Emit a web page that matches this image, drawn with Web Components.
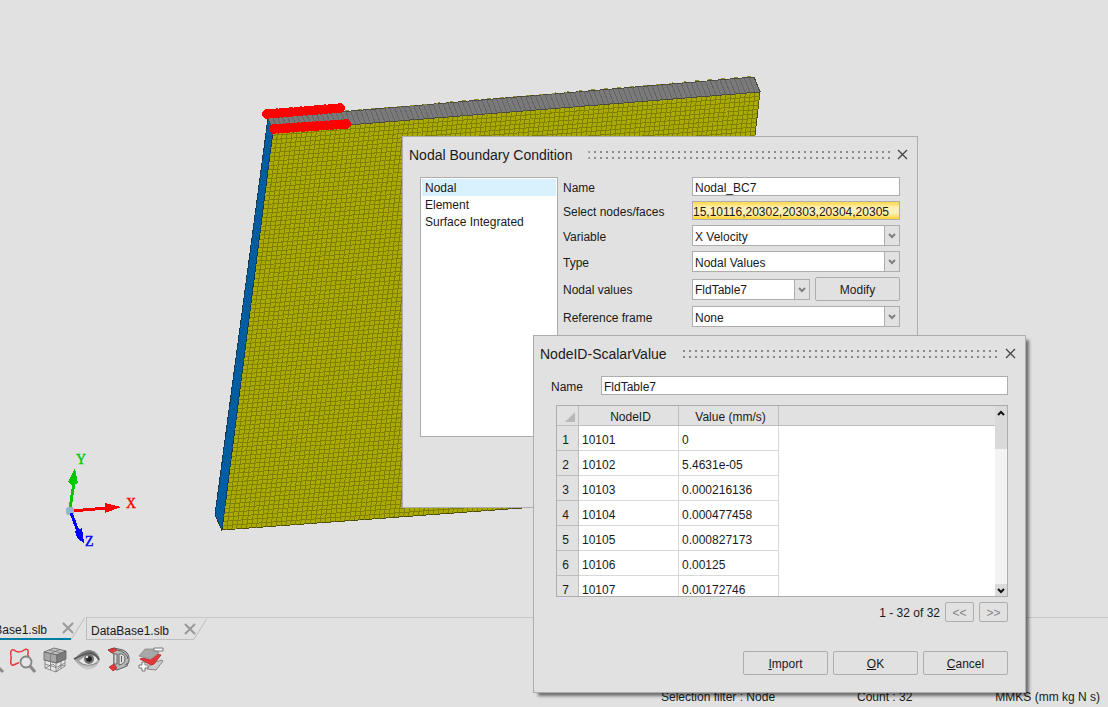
<!DOCTYPE html>
<html lang="en">
<head>
<meta charset="utf-8">
<title>Nodal Boundary Condition</title>
<style>
    html, body {
        margin: 0;
        height: 100%;
    }
    body {
        --panel: #e1e1e1;
        --line: #adadad;
        --text: #1a1a1a;
        overflow: hidden;
        background: var(--panel);
        color: var(--text);
        font: 12px/16px "Liberation Sans", Arial, sans-serif;
    }
</style>
</head>
<body>
<app-shell>
    <model-view slot="view"></model-view>
    <file-tabs slot="panel"></file-tabs>
    <tool-strip slot="panel"></tool-strip>
    <status-bar slot="panel"></status-bar>
    <tool-dialog slot="window" heading="Nodal Boundary Condition" style="left: 402px; top: 136px; width: 514px; height: 370px">
        <boundary-form></boundary-form>
    </tool-dialog>
    <tool-dialog slot="window" class="raised" heading="NodeID-ScalarValue" style="left: 533px; top: 335px; width: 491px; height: 356px">
        <value-form></value-form>
    </tool-dialog>
</app-shell>

<script>
const controls = `
    *, *::before, *::after { box-sizing: border-box; }
    input, select, button {
        margin: 0;
        font: inherit;
        color: inherit;
        border-radius: 0;
        outline: none;
    }
    label { padding-top: 2px; }
    input {
        width: 100%;
        min-width: 0;
        height: 19px;
        padding: 2px 2px 0;
        border: 1px solid var(--line);
        background: #fff;
    }
    .button {
        height: 24px;
        padding: 2px 0 0;
        border: 1px solid var(--line);
        border-radius: 2px;
        background: var(--panel);
    }
`;

class AppShell extends HTMLElement {
    constructor() {
        super();
        this.attachShadow({ mode: 'open' });
        this.shadowRoot.innerHTML = `
            <style>
                :host {
                    display: flex;
                    flex-direction: column;
                    position: relative;
                    height: 100vh;
                    overflow: hidden;
                }
                .view { flex: 1; min-height: 0; }
                .panel { display: flex; flex-direction: column; height: 90px; }
            </style>
            <div class="view"><slot name="view"></slot></div>
            <div class="panel"><slot name="panel"></slot></div>
            <slot name="window"></slot>
        `;
    }
}

class ModelView extends HTMLElement {
    constructor() {
        super();
        this.attachShadow({ mode: 'open' });
    }

    connectedCallback() {
        this.render();
    }

    mix(a, b, t) {
        return [a[0] + (b[0] - a[0]) * t, a[1] + (b[1] - a[1]) * t];
    }

    // lines that run from edge a-b to edge c-d
    lines(a, b, c, d, count) {
        let path = '';
        for (let i = 1; i < count; i++) {
            const p = this.mix(a, b, i / count);
            const q = this.mix(c, d, i / count);
            path += `M${p[0].toFixed(1)} ${p[1].toFixed(1)}L${q[0].toFixed(1)} ${q[1].toFixed(1)}`;
        }
        return path;
    }

    nodes(a, b, count) {
        let dots = '';
        for (let i = 0; i < count; i++) {
            const p = this.mix(a, b, i / (count - 1));
            dots += `<circle cx="${p[0].toFixed(1)}" cy="${p[1].toFixed(1)}" r="4.9"/>`;
        }
        return dots;
    }

    render() {
        const backLeft = [268, 118], backRight = [754, 77];
        const topLeft = [273, 131], topRight = [760, 92];
        const bottomLeft = [222, 530], bottomRight = [713, 494];
        const backBottom = [215, 515];
        const face = (...points) => points.map(p => p.join(',')).join(' ');

        this.shadowRoot.innerHTML = `
            <style>
                :host { display: block; height: 100%; }
                svg { display: block; width: 100%; height: 100%; overflow: visible; }
                text { font: 14px "Liberation Serif", "Times New Roman", serif; stroke-width: 0.4; }
            </style>
            <svg aria-label="Meshed plate">
                <g shape-rendering="crispEdges" fill="none">
                    <polygon fill="#aaaa00" stroke="#4d4d10" points="${face(topLeft, topRight, bottomRight, bottomLeft)}"/>
                    <path stroke="#808000" d="${this.lines(topLeft, topRight, bottomLeft, bottomRight, 100)}"/>
                    <path stroke="#808000" d="${this.lines(topLeft, bottomLeft, topRight, bottomRight, 92)}"/>
                    <polygon fill="#0062a8" stroke="#1c3444" points="${face(backLeft, topLeft, bottomLeft, backBottom)}"/>
                    <path stroke="#005795" d="${this.lines(backLeft, backBottom, topLeft, bottomLeft, 92)}"/>
                    <polygon fill="#7a7a7a" stroke="#4a4a3c" points="${face(backLeft, backRight, topRight, topLeft)}"/>
                    <path stroke="#646464" d="${this.lines(backLeft, backRight, topLeft, topRight, 100)}"/>
                    <path stroke="#8f8f2c" stroke-dasharray="4 9" d="M345 111L754 76"/>
                    <g fill="#ff0000">
                        ${this.nodes([267, 114], [340, 108], 16)}
                        ${this.nodes([274, 129], [346, 124], 16)}
                    </g>
                </g>
                <g stroke-width="3" shape-rendering="crispEdges">
                    <path stroke="#00c800" d="M70 509L74 482"/>
                    <path fill="#00c800" d="M75 468L78 483 73 486 68 482z"/>
                    <path stroke="#ff0000" d="M72 511L106 508"/>
                    <path fill="#ff0000" d="M105 503L121 507 105 513z"/>
                    <circle cx="70" cy="511" r="4.5" fill="#9db2cc"/>
                    <path stroke="#0000ff" d="M71 513L78 531"/>
                    <path fill="#0000ff" d="M75 531L82 528 84 543 77 538z"/>
                </g>
                <text x="76" y="464" fill="#00c800" stroke="#00c800">Y</text>
                <text x="126" y="508" fill="#ff0000" stroke="#ff0000">X</text>
                <text x="85" y="546" fill="#0000ff" stroke="#0000ff">Z</text>
            </svg>
        `;
    }
}

class FileTabs extends HTMLElement {
    constructor() {
        super();
        this.attachShadow({ mode: 'open' });
        const close = `
            <button aria-label="Close file">
                <svg width="12" height="12" fill="none" stroke="#999" stroke-width="2"><path d="M1 1L11 11M11 1L1 11"/></svg>
            </button>`;
        const edge = '<svg class="edge" width="14" height="23" fill="none" stroke="#bdbdbd"><path d="M0 22.5L14 .5"/></svg>';
        this.shadowRoot.innerHTML = `
            <style>
                :host { display: flex; height: 23px; }
                nav { display: flex; margin-left: -36px; }
                .tab { display: flex; }
                .label {
                    display: flex;
                    align-items: center;
                    gap: 13px;
                    height: 23px;
                    box-sizing: border-box;
                    padding-left: 5px;
                    border-bottom: 1px solid #bdbdbd;
                }
                .label a { width: 80px; color: inherit; text-decoration: none; padding-top: 4px; }
                .current .label { border-bottom: 2px solid #007fa3; }
                .other { margin-left: 1px; }
                .other .label { padding-left: 4px; border-left: 1px solid #bdbdbd; border-top: 1px solid #c6c6c6; }
                button { display: flex; margin: 0 -3px 0 0; padding: 0; border: 0; background: none; }
                .edge { display: block; }
                .other .edge { border-top: 1px solid #c6c6c6; box-sizing: border-box; }
                .rest { flex: 1; border-top: 1px solid #c6c6c6; }
            </style>
            <nav>
                <div class="tab current"><div class="label"><a href="#first">DataBase1.slb</a>${close}</div>${edge}</div>
                <div class="tab other"><div class="label"><a href="#second">DataBase1.slb</a>${close}</div>${edge}</div>
            </nav>
            <div class="rest"></div>
        `;
    }
}

class ToolStrip extends HTMLElement {
    constructor() {
        super();
        this.attachShadow({ mode: 'open' });
        this.shadowRoot.innerHTML = `
            <style>
                :host { display: flex; gap: 4px; margin: 6px 0 0 -23px; }
                button { padding: 0; border: 0; background: none; height: 28px; }
                svg { display: block; width: 28px; height: 28px; }
            </style>
            <button aria-label="Zoom">
                <svg viewBox="0 0 28 28" fill="none" stroke="#888"><circle cx="15" cy="15" r="7" stroke-width="2"/><path d="M20 20L26 26" stroke-width="3"/></svg>
            </button>
            <button aria-label="Zoom region">
                <svg viewBox="0 0 28 28" fill="none">
                    <path stroke="#e8383d" stroke-width="1.5" d="M10 17C7 17 5 20 3 19C0 17 3 13 2 10C1 6 2 3 5 4C8 7 13 6 15 4C18 2 20 4 19 7C18 9 19 10 20 11"/>
                    <circle cx="17" cy="16" r="5.5" fill="#e6e6e6" stroke="#858585" stroke-width="1.8"/>
                    <path stroke="#888" stroke-width="3" d="M21 20L26 26"/>
                </svg>
            </button>
            <button aria-label="Mesh">
                <svg viewBox="0 0 28 28" stroke="#606060" stroke-width=".8" stroke-linejoin="round">
                    <path fill="#e8e8e8" stroke="#777" d="M4 14L15 17 24 13V20L15 26 4 22z"/>
                    <path fill="none" stroke="#777" d="M15 17V26M9.500 15.500V24M20 15V23M4 18L15 21.500 24 17M4 22L12 18 15 21M15 26L20 19 24 20"/>
                    <path fill="#c2c2c2" d="M3 6L13 2 25 5 16 9z"/>
                    <path fill="#a6a6a6" d="M3 6L16 9V17L3 14z"/>
                    <path fill="#7c7c7c" d="M16 9L25 5V13L16 17z"/>
                    <path fill="none" stroke="#777" d="M9.500 7.500V15.500M20.500 7V15M9.500 7.500L19 3.500M8 4L20.500 7"/>
                </svg>
            </button>
            <button aria-label="Visibility">
                <svg viewBox="0 0 28 28">
                    <defs>
                        <linearGradient id="lid" x2="0" y2="1">
                            <stop stop-color="#707070"/><stop offset="1" stop-color="#d4d4d4"/>
                        </linearGradient>
                    </defs>
                    <path fill="url(#lid)" d="M1 13Q9 4 17 4Q25 6 27 13Q25 23 14 24Q6 21 1 13z"/>
                    <path fill="#e6e6e6" d="M6 15Q12 9 18 9Q23 10 25 14Q20 20 14 19Q9 18 6 15z"/>
                    <path fill="none" stroke="#555" stroke-width="1.6" d="M1 13Q12 7 18 7Q24 9 26 14"/>
                    <path fill="none" stroke="#888" d="M6 16Q14 22 24 17"/>
                    <circle cx="16" cy="13" r="5" fill="#707070"/>
                    <circle cx="16" cy="13" r="2.800" fill="#202020"/>
                    <circle cx="14" cy="11" r="1.300" fill="#ddd"/>
                </svg>
            </button>
            <button aria-label="Part display">
                <svg viewBox="0 0 28 28" stroke="#606060" stroke-linejoin="round">
                    <path fill="#b8b8b8" d="M3 4L9 2 18 4Q25 7 24 15L22 20 12 24 5 22 9 18V8z"/>
                    <path fill="#e5383d" stroke="#a03030" stroke-width=".7" d="M3 4L9 2 12 4 7 7zM4 21L9 18 12 22 8 25z"/>
                    <path fill="#dedede" d="M9 8H12V18H9zM14 8Q20 7 20 13Q20 18 14 19z"/>
                    <path fill="none" d="M16.500 10V16M12 4Q22 6 23 13M20 19L23 17"/>
                </svg>
            </button>
            <button aria-label="Layers">
                <svg viewBox="0 0 28 28" stroke-linejoin="round">
                    <path fill="#ccc" stroke="#888" d="M10 23L15 17 25 14 26 15 19 24z"/>
                    <path fill="#e5383d" stroke="#b32025" stroke-width=".8" d="M3 13L6 12 14 14 20 8 24 9 17 18 14 19z"/>
                    <path fill="#a8a8a8" stroke="#888" stroke-width=".8" d="M2 10L8 3 19 3 22 7 14 13z"/>
                    <path fill="#fff" stroke="#777" d="M17 2H26V5H17zM2 19H5V16H8V19H11V22H8V25H5V22H2z"/>
                </svg>
            </button>
        `;
    }
}

class StatusBar extends HTMLElement {
    constructor() {
        super();
        this.attachShadow({ mode: 'open' });
        this.shadowRoot.innerHTML = `
            <style>
                :host {
                    display: grid;
                    grid-template-columns: 196px 1fr auto;
                    margin: auto 8px 2px auto;
                    width: 439px;
                }
            </style>
            <span>Selection filter : Node</span>
            <span>Count : 32</span>
            <span>MMKS (mm kg N s)</span>
        `;
    }
}

class ToolDialog extends HTMLElement {
    constructor() {
        super();
        this.attachShadow({ mode: 'open' });
    }

    connectedCallback() {
        this.render();
    }

    render() {
        this.shadowRoot.innerHTML = `
            <style>
                :host {
                    display: flex;
                    flex-direction: column;
                    position: absolute;
                    border: 1px solid var(--line);
                    background: var(--panel);
                }
                :host(.raised) { box-shadow: 4px 4px 3px -1px rgba(0, 0, 0, 0.5); }
                header { display: flex; align-items: center; height: 36px; padding: 0 9px 0 6px; }
                h2 { margin: 0; font-size: 14px; font-weight: normal; line-height: 20px; }
                .grip {
                    flex: 1;
                    height: 8px;
                    margin: 0 6px 0 16px;
                    background: linear-gradient(90deg, #8a8a8a 2px, transparent 2px) 0 0 / 6px 100%;
                    clip-path: polygon(0 0, 100% 0, 100% 2px, 0 2px, 0 6px, 100% 6px, 100% 8px, 0 8px);
                }
                button { display: flex; margin-bottom: 2px; padding: 0; border: 0; background: none; }
            </style>
            <header>
                <h2>${this.getAttribute('heading')}</h2>
                <span class="grip"></span>
                <button aria-label="Close">
                    <svg width="11" height="11" fill="none" stroke="#444" stroke-width="1.3"><path d="M1 1L10 10M10 1L1 10"/></svg>
                </button>
            </header>
            <slot></slot>
        `;
    }
}

class BoundaryForm extends HTMLElement {
    constructor() {
        super();
        this.attachShadow({ mode: 'open' });
    }

    connectedCallback() {
        this.render();
    }

    combo(id, value) {
        return `
            <span class="combo">
                <select id="${id}"><option>${value}</option></select>
                <svg width="16" height="21" fill="none" stroke="#808080" stroke-width="2"><path stroke="#adadad" stroke-width="1" d="M.5 0V21"/><path d="M5 9L8 12 11 9"/></svg>
            </span>`;
    }

    render() {
        this.shadowRoot.innerHTML = `
            <style>
                ${controls}
                :host { display: flex; flex: 1; align-items: flex-start; padding: 4px 17px 0 17px; gap: 5px; }
                ul {
                    width: 138px;
                    height: 260px;
                    margin: 0;
                    padding: 1px;
                    list-style: none;
                    border: 1px solid var(--line);
                    background: #fff;
                }
                li button {
                    display: block;
                    width: 100%;
                    height: 17px;
                    padding: 1px 3px 0;
                    border: 0;
                    background: none;
                    text-align: left;
                }
                li button.selected { background: #d9f1fd; }
                form {
                    flex: 1;
                    display: grid;
                    grid-template-columns: 129px 1fr;
                    row-gap: 5px;
                    align-items: center;
                }
                .picked {
                    padding: 2px 0 0;
                    background: linear-gradient(#ffd84a, #fff0b8 35%, #fff0b8 65%, #ffd42e);
                }
                .combo { display: grid; min-width: 0; }
                .combo > * { grid-area: 1 / 1; }
                .combo svg { justify-self: end; pointer-events: none; background: linear-gradient(var(--panel) 19px, transparent 0) 1px 1px / 14px 19px no-repeat; }
                select {
                    appearance: none;
                    width: 100%;
                    height: 21px;
                    padding: 2px 2px 0;
                    border: 1px solid var(--line);
                    background: #fff;
                }
                .pair { display: grid; grid-template-columns: 118px 1fr; gap: 5px; align-items: center; }
            </style>
            <ul>
                <li><button class="selected">Nodal</button></li>
                <li><button>Element</button></li>
                <li><button>Surface Integrated</button></li>
            </ul>
            <form>
                <label for="name">Name</label>
                <input id="name" value="Nodal_BC7">
                <label for="nodes">Select nodes/faces</label>
                <input id="nodes" class="picked" value="15,10116,20302,20303,20304,20305">
                <label for="variable">Variable</label>
                ${this.combo('variable', 'X Velocity')}
                <label for="type">Type</label>
                ${this.combo('type', 'Nodal Values')}
                <label for="values">Nodal values</label>
                <div class="pair">
                    ${this.combo('values', 'FldTable7')}
                    <button type="button" class="button">Modify</button>
                </div>
                <label for="frame">Reference frame</label>
                ${this.combo('frame', 'None')}
            </form>
        `;
    }
}

class ValueForm extends HTMLElement {
    constructor() {
        super();
        this.attachShadow({ mode: 'open' });
        this.rows = [
            ['10101', '0'],
            ['10102', '5.4631e-05'],
            ['10103', '0.000216136'],
            ['10104', '0.000477458'],
            ['10105', '0.000827173'],
            ['10106', '0.00125'],
            ['10107', '0.00172746']
        ];
    }

    connectedCallback() {
        this.render();
    }

    render() {
        const body = this.rows.map((row, i) => `
            <tr><th scope="row">${i + 1}</th><td>${row[0]}</td><td>${row[1]}</td><td class="fill"></td></tr>`).join('');

        this.shadowRoot.innerHTML = `
            <style>
                ${controls}
                :host { display: flex; flex-direction: column; padding: 4px 17px 0; }
                .name { display: grid; grid-template-columns: 50px 1fr; align-items: center; }
                .grid {
                    display: flex;
                    height: 192px;
                    margin: 10px 0 5px 5px;
                    overflow: hidden;
                    border: 1px solid var(--line);
                    background: #fff;
                }
                table {
                    flex: 1;
                    height: max-content;
                    table-layout: fixed;
                    border-collapse: separate;
                    border-spacing: 0;
                }
                .index { width: 22px; }
                .value { width: 100px; }
                th, td { padding: 4px 3px 0; border: solid #d8d8d8; border-width: 0 1px 1px 0; }
                th { font-weight: normal; background: var(--panel); border-color: #bdbdbd; }
                td { height: 25px; }
                tbody th { padding: 4px 4px 0 0; }
                thead th { height: 20px; padding: 3px 0 0 4px; }
                thead th:last-child { border-right: 0; }
                .fill { border: 0; }
                .corner svg { display: block; margin-left: 4px; }
                .scroll {
                    display: flex;
                    flex-direction: column;
                    justify-content: space-between;
                    width: 12px;
                    background: #f3f3f3;
                }
                .thumb { height: 43px; padding-top: 4px; background: #dadada; }
                .down { height: 12px; padding-top: 4px; background: #dadada; }
                .scroll svg { display: block; margin: 0 auto; }
                .pager { display: flex; justify-content: flex-end; align-items: center; gap: 5px; }
                .pager span { padding-top: 2px; }
                .pager .button { width: 29px; height: 20px; color: #858585; }
                .actions { display: flex; justify-content: flex-end; gap: 5px; margin-top: 29px; }
                .actions .button { width: 85px; }
            </style>
            <div class="name">
                <label for="table-name">Name</label>
                <input id="table-name" value="FldTable7">
            </div>
            <div class="grid">
                <table>
                    <colgroup><col class="index"><col class="value"><col class="value"><col></colgroup>
                    <thead>
                        <tr>
                            <th class="corner"><svg width="11" height="11"><path fill="#b8b8b8" d="M10 0V10H0z"/></svg></th>
                            <th scope="col">NodeID</th>
                            <th scope="col">Value (mm/s)</th>
                            <th></th>
                        </tr>
                    </thead>
                    <tbody>${body}</tbody>
                </table>
                <div class="scroll">
                    <div class="thumb"><svg width="8" height="6" fill="none" stroke="#111" stroke-width="2"><path d="M1 5L4 2 7 5"/></svg></div>
                    <div class="down"><svg width="8" height="6" fill="none" stroke="#111" stroke-width="2"><path d="M1 1L4 4 7 1"/></svg></div>
                </div>
            </div>
            <div class="pager">
                <span>1 - 32 of 32</span>
                <button class="button" disabled>&lt;&lt;</button>
                <button class="button" disabled>&gt;&gt;</button>
            </div>
            <div class="actions">
                <button class="button"><u>I</u>mport</button>
                <button class="button"><u>O</u>K</button>
                <button class="button"><u>C</u>ancel</button>
            </div>
        `;
    }
}

customElements.define('app-shell', AppShell);
customElements.define('model-view', ModelView);
customElements.define('file-tabs', FileTabs);
customElements.define('tool-strip', ToolStrip);
customElements.define('status-bar', StatusBar);
customElements.define('tool-dialog', ToolDialog);
customElements.define('boundary-form', BoundaryForm);
customElements.define('value-form', ValueForm);
</script>
</body>
</html>
